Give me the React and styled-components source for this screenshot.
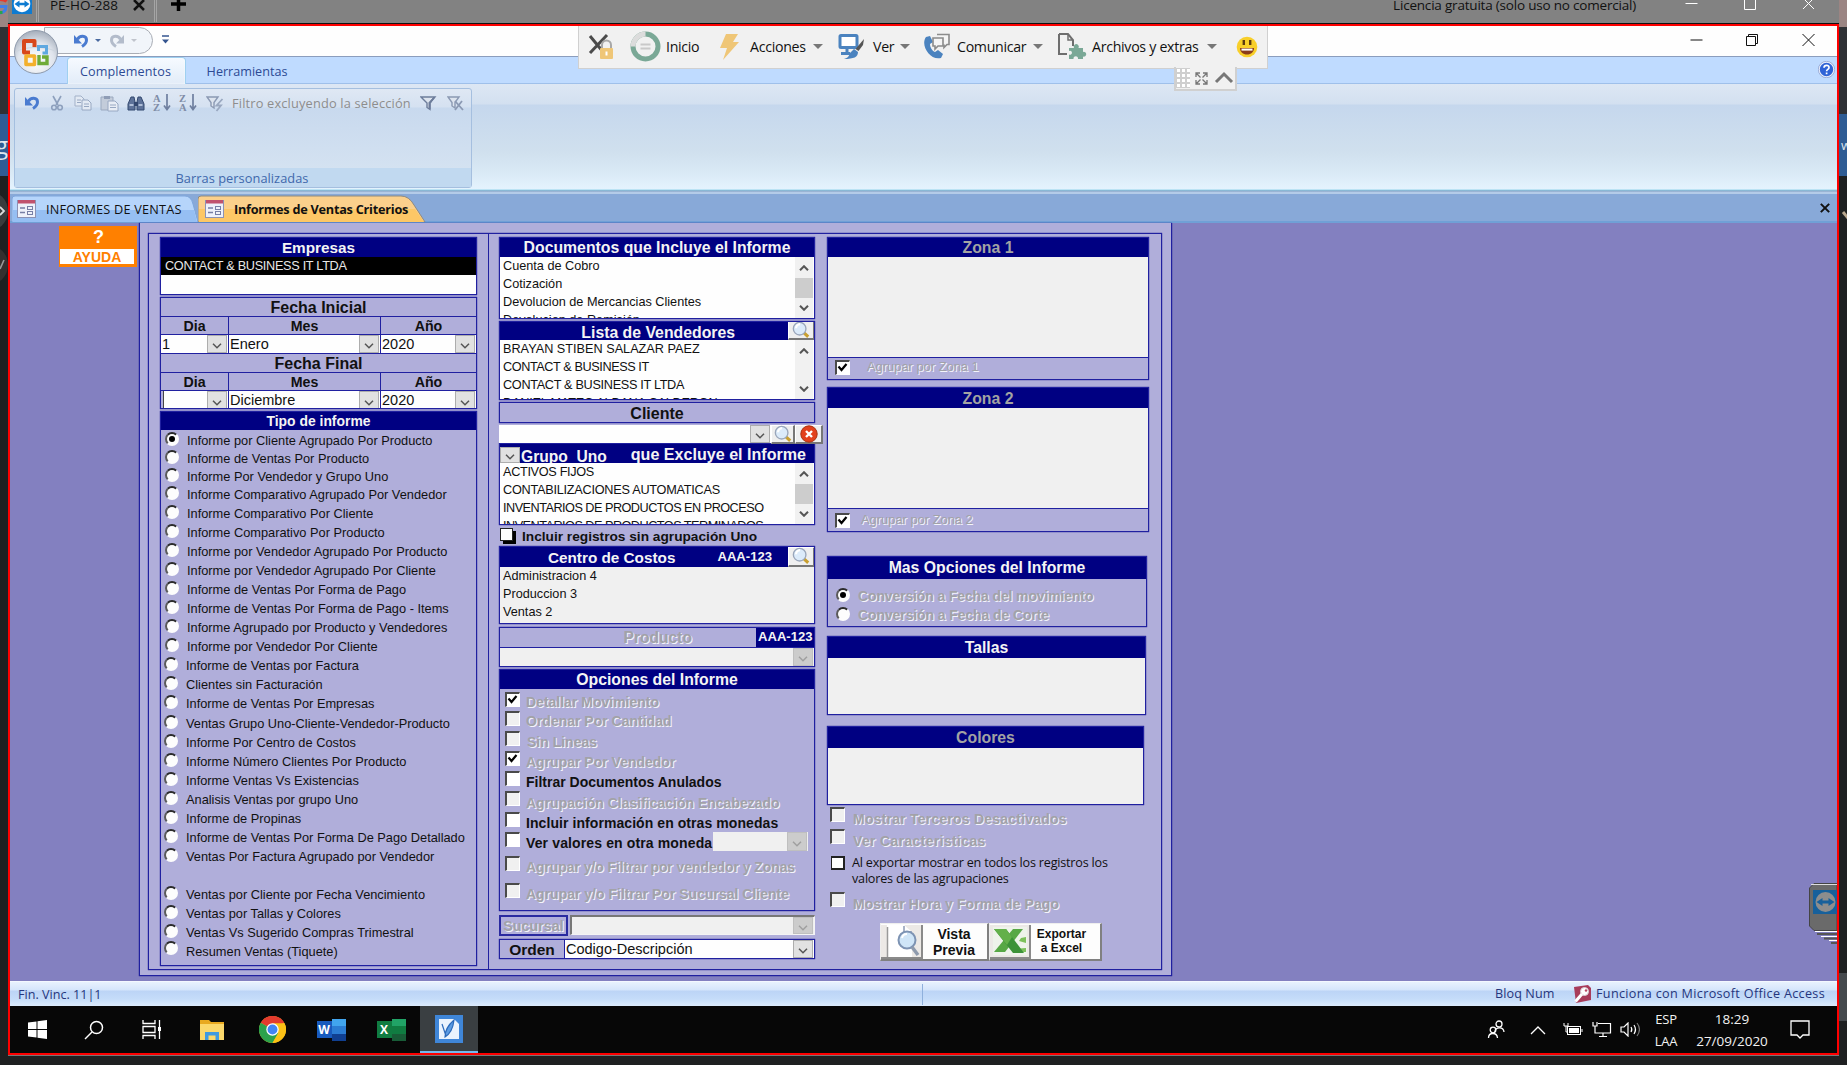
import React from "react";
import styled, { createGlobalStyle, css } from "styled-components";

const NAVY = "#000082";
const LINE = "#2020a0";
const LILAC = "#b0aeda";
const BACK = "#8380c0";
const ARIAL = `"Liberation Sans", Arial, sans-serif`;
const SEGOE = `"Open Sans", "Noto Sans", sans-serif`;

const Global = createGlobalStyle`
  *, *::before, *::after { box-sizing: border-box; }
  html, body { margin: 0; padding: 0; background: #fff; overflow: hidden; }
  body { font-family: ${ARIAL}; color: #111; }
  svg { display: block; flex: none; }
`;

/* ---------- outer desktop ---------- */
const Screen = styled.div`
  position: relative;
  width: 1847px;
  height: 1079px;
  overflow: hidden;
  background: #fff;
`;
const Desktop = styled.div`
  display: flex;
  height: 1065px;
  background: #1e2021;
`;
const EdgeStrip = styled.div`
  display: flex;
  flex-direction: column;
  flex: none;
  width: 8px;
  overflow: hidden;
`;
const EdgePart = styled.div`
  flex: none;
  display: flex;
  align-items: center;
  justify-content: ${(p) => p.$align || "flex-end"};
  height: ${(p) => p.$h}px;
  background: ${(p) => p.$bg};
  color: ${(p) => p.$c || "#dfe6ee"};
  font: ${(p) => p.$size || 22}px ${SEGOE};
  white-space: nowrap;
  overflow: hidden;
`;
const Center = styled.div`
  display: flex;
  flex-direction: column;
  width: 1831px;
  height: 1056px;
  border-bottom: 1px solid #777;
`;
const SessionBar = styled.div`
  display: flex;
  height: 24px;
  background: #828282;
  border-bottom: 1px solid #111;
  padding-left: 4px;
  overflow: hidden;
`;
const SessionText = styled.span`
  font: ${(p) => p.$size || 13}px/20px ${SEGOE};
  letter-spacing: ${(p) => p.$ls || 0}px;
  margin: -5px 0 0 ${(p) => p.$ml || 0}px;
  color: #111;
  white-space: nowrap;
`;
const SessionSep = styled.i`
  width: 3px;
  height: 22px;
  margin-left: ${(p) => p.$ml}px;
  border-left: 1px solid #a5a5a5;
  border-right: 1px solid #a5a5a5;
`;
const Slot = styled.span`
  display: flex;
  flex: none;
  margin: ${(p) => p.$m || 0};
`;
const Spacer = styled.div`
  flex: 1;
`;
const RemoteWindow = styled.div`
  position: relative;
  display: flex;
  flex-direction: column;
  height: 1031px;
  border: 2px solid #fe0000;
  overflow: hidden;
`;

/* ---------- Office chrome ---------- */
const TitleBar = styled.div`
  display: flex;
  height: 31px;
  background: #fefefe;
  border-bottom: 1px solid #8b9dbd;
`;
const QuickAccess = styled.div`
  display: flex;
  align-items: center;
  width: 109px;
  height: 27px;
  margin: 1px 0 0 34px;
  padding-left: 28px;
  border: 1px solid #a9adb5;
  border-radius: 0 14px 14px 0;
  background: #f1f5fa;
`;
const OfficeButton = styled.div`
  position: absolute;
  left: 4px;
  top: 3px;
`;
const TabStrip = styled.div`
  display: flex;
  height: 27px;
  padding-left: 57px;
  background: #bfdbff;
  border-bottom: 1px solid #9fc0ea;
`;
const RibbonTab = styled.div`
  width: ${(p) => p.$w}px;
  height: 27px;
  font: 12.6px/29px ${SEGOE};
  letter-spacing: ${(p) => p.$ls || 0}px;
  color: #2c4a94;
  text-align: center;
  white-space: nowrap;
  ${(p) =>
    p.$active &&
    css`
      background: linear-gradient(#f6faff, #e2ecf8);
      border: 1px solid #9fd0f0;
      border-bottom: 0;
      border-radius: 4px 4px 0 0;
      box-shadow: inset 0 0 2px #fff;
      line-height: 28px;
      padding-right: 2px;
    `}
`;
const Ribbon = styled.div`
  height: 110px;
  padding: 4px 4px 0;
  background: linear-gradient(#dde7f4 0, #d3e0f0 20px, #c5d7ed 21px, #d0e0ee 68px, #d9e9f5 88px, #e4f3fe 105px, #93d3ea 106px, #7f9cbf 107px, #b4cbe8 108px);
`;
const RibbonGroup = styled.div`
  display: flex;
  flex-direction: column;
  width: 458px;
  height: 100px;
  border: 1px solid #a5bfdf;
  border-radius: 3px;
  background: linear-gradient(#dfe8f4 0, #d5e1f1 18px, #c8d9ee 19px, #d4e2f1 80px);
`;
const RibbonRow = styled.div`
  display: flex;
  align-items: center;
  height: 28px;
  padding-left: 9px;
`;
const RibbonText = styled.span`
  width: 189px;
  padding-left: 8px;
  font: 12.8px/20px ${SEGOE};
  letter-spacing: 0.17px;
  color: #8d8d8d;
  white-space: nowrap;
`;
const RibbonLabel = styled.div`
  margin-top: auto;
  height: 19px;
  padding-right: 2px;
  background: #c1d9f0;
  color: #4068ac;
  text-align: center;
  font: 12.8px/20px ${SEGOE};
  letter-spacing: 0.05px;
`;
const DocTabs = styled.div`
  display: flex;
  align-items: flex-end;
  height: 29px;
  padding: 0 7px 0 2px;
  background: #88a9d8;
  border-bottom: 2px solid #70a0d6;
`;
const DocTab = styled.div`
  position: relative;
  display: flex;
  align-items: center;
  width: ${(p) => p.$w}px;
  height: 27px;
  margin-bottom: -1px;
`;
const DocShape = styled.span`
  position: absolute;
  inset: 0;
`;
const DocName = styled.span`
  position: relative;
  margin-left: 10px;
  font: ${(p) => (p.$bold ? 700 : 400)} 12.7px/20px ${SEGOE};
  letter-spacing: ${(p) => p.$ls || 0}px;
  color: #111;
  white-space: nowrap;
`;
const TabIcon = styled.span`
  position: relative;
  margin-left: ${(p) => p.$ml}px;
`;

/* ---------- floating remote toolbar ---------- */
const RemoteToolbar = styled.div`
  position: absolute;
  left: 568px;
  top: 0;
  display: flex;
  align-items: center;
  width: 690px;
  height: 43px;
  padding: 0 0 1px 9px;
  background: #f1f1f1;
  border: 1px solid #d0d0d0;
  border-top: 0;
`;
const RemoteItem = styled.div`
  display: flex;
  align-items: center;
  flex: none;
  width: ${(p) => p.$w}px;
  gap: ${(p) => p.$gap || 8}px;
`;
const RemoteText = styled.span`
  font: 14.2px/20px ${SEGOE};
  letter-spacing: -0.3px;
  color: #111;
  white-space: nowrap;
`;
const Caret = styled.i`
  border: ${(p) => p.$s || 5}px solid transparent;
  border-top-color: ${(p) => p.$c || "#777"};
  border-bottom: 0;
  margin-left: ${(p) => p.$ml || 0}px;
`;
const RemoteHandle = styled.div`
  position: absolute;
  left: 1164px;
  top: 41px;
  width: 63px;
  height: 24px;
  padding-top: 1px;
  background: #f1f1f1;
  border: 2px solid #d0d0d0;
  border-top: 0;
`;
const SideHandle = styled.div`
  position: absolute;
  left: 1799px;
  top: 857px;
`;

/* ---------- workspace / Access form ---------- */
const Workspace = styled.div`
  display: flex;
  height: 758px;
  background: ${BACK};
`;
const HelpPane = styled.div`
  width: 129px;
  padding: 3px 0 0 49px;
`;
const HelpButton = styled.div`
  width: 78px;
  height: 41px;
  padding: 0 3px 3px 1px;
  background: #ff8000;
  color: #fff;
  text-align: center;
  font: 700 18px/22px ${ARIAL};
`;
const HelpMark = styled.div`
  padding-left: 3px;
`;
const HelpCaption = styled.div`
  height: 15px;
  margin-top: 1px;
  background: #fff;
  color: #ff8000;
  font: 700 14px/16px ${ARIAL};
`;
const Form = styled.div`
  width: 1033px;
  height: 753px;
  padding: 10px 9px 6px 8px;
  background: ${LILAC};
  border: 1px solid ${LINE};
  border-top: 0;
  box-shadow: 0 0 1px ${NAVY};
`;
const FormFrame = styled.div`
  display: grid;
  grid-template-columns: 339px 339px 1fr;
  height: 737px;
  border: 1px solid ${LINE};
  box-shadow: 0 0 1px ${NAVY};
`;
const Column = styled.div`
  display: flex;
  flex-direction: column;
  padding: 3px 0 0 ${(p) => p.$pl}px;
  border-left: ${(p) => (p.$rule ? `1px solid ${LINE}` : "0")};
`;
const Box = styled.div`
  flex: none;
  display: flex;
  flex-direction: column;
  width: ${(p) => p.$w || 316}px;
  height: ${(p) => p.$h}px;
  margin-top: ${(p) => p.$mt || 0}px;
  border: 1px solid ${LINE};
  box-shadow: 0 0 1px ${NAVY};
  background: ${(p) => p.$bg || "transparent"};
  overflow: hidden;
`;
const Heading = styled.div`
  flex: none;
  display: flex;
  justify-content: ${(p) => p.$justify || "center"};
  align-items: center;
  height: ${(p) => p.$h || 20}px;
  margin: -1px -1px 0 -1px;
  padding: ${(p) => p.$pt ?? 2}px 0 0 ${(p) => p.$pl || 0}px;
  background: ${NAVY};
  color: ${(p) => (p.$dim ? "#a3a3a3" : "#f4f4f4")};
  font: 700 ${(p) => p.$size || 15.8}px/18px ${ARIAL};
  white-space: nowrap;
`;
const PlainHeading = styled.div`
  flex: none;
  height: 19px;
  text-align: center;
  font: 700 16px/${(p) => p.$lh || 20}px ${ARIAL};
  border-bottom: ${(p) => (p.$last ? 0 : `1px solid ${LINE}`)};
`;
const ListArea = styled.div`
  display: flex;
  flex: 1;
  min-height: 0;
  background: ${(p) => (p.$dim ? "#f0f0f0" : "#fefefe")};
`;
const Items = styled.div`
  flex: 1;
  min-width: 0;
  overflow: hidden;
  padding-left: 3px;
`;
const Item = styled.div`
  height: 18px;
  font: 12.7px/18px ${ARIAL};
  letter-spacing: ${(p) => p.$ls || 0}px;
  white-space: nowrap;
`;
const SelectedItem = styled(Item)`
  padding-left: 4px;
  background: #000;
  color: #e8e8e8;
`;
const ScrollTrack = styled.div`
  display: flex;
  flex-direction: column;
  justify-content: space-between;
  align-items: center;
  width: 18px;
  margin-right: 1px;
  padding: 8px 0 7px;
  background: #f1f1f1;
`;
const ScrollThumb = styled.div`
  width: 18px;
  height: 20px;
  background: #cdcdcd;
`;
const DateHeads = styled.div`
  display: grid;
  grid-template-columns: 67px 152px 1fr;
  flex: none;
  height: 18px;
  border-bottom: 1px solid ${LINE};
`;
const DateHead = styled.div`
  text-align: center;
  font: 700 14.2px/19px ${ARIAL};
  & + & {
    border-left: 1px solid ${LINE};
  }
`;
const DateFields = styled(DateHeads)`
  height: 19px;
  background: #fefefe;
  border-bottom: ${(p) => (p.$last ? 0 : `1px solid ${LINE}`)};
`;
const Combo = styled.div`
  display: flex;
  align-items: stretch;
  flex: ${(p) => (p.$w ? "none" : 1)};
  width: ${(p) => (p.$w ? `${p.$w}px` : "auto")};
  height: ${(p) => (p.$h ? `${p.$h}px` : "auto")};
  background: ${(p) => (p.$dim ? "#f0f0f0" : "#fefefe")};
  padding: 0 1px;
  font: 14.5px/18px ${ARIAL};
  white-space: nowrap;
  ${(p) => p.$ruled && `border-left: 1px solid ${LINE};`}
  ${(p) => p.$sunken && "border: 1px solid #f4f4f4; border-top: 2px solid #777; border-left: 2px solid #777;"}
  ${(p) => p.$caret && "box-shadow: inset 2px 0 0 #b0aeda, inset 3px 0 0 #444;"}
`;
const ComboValue = styled.span`
  flex: 1;
`;
const ComboButton = styled.span`
  display: flex;
  flex: none;
  align-items: center;
  justify-content: center;
  width: 20px;
  padding-top: 4px;
  background: ${(p) => (p.$dim ? "#cccccc" : "#e1e1e1")};
  border: 1px solid ${(p) => (p.$dim ? "#bfbfbf" : "#adadad")};
`;
const RadioList = styled.div`
  padding-top: 1px;
`;
const RadioRow = styled.div`
  display: flex;
  height: ${(p) => p.$h || 19}px;
  margin-top: ${(p) => p.$mt || 0}px;
  padding-left: ${(p) => p.$pl || 5}px;
`;
const RadioDot = styled.i`
  flex: none;
  display: flex;
  align-items: center;
  justify-content: center;
  width: 14px;
  height: 14px;
  margin: ${(p) => p.$mt || 1}px 8px 0 0;
  border-radius: 50%;
  background: #fdfdfd;
  border: 2px solid;
  border-color: #2b2b2b #fdfdfd #fdfdfd #5a5a5a;
  &::after {
    content: "";
    width: 6px;
    height: 6px;
    border-radius: 50%;
    background: ${(p) => (p.$on ? "#000" : "transparent")};
  }
`;
const RadioText = styled.span`
  font: 12.8px/19px ${ARIAL};
  white-space: nowrap;
`;
const OptionRow = styled.div`
  display: flex;
  flex: none;
  height: ${(p) => p.$h || 20}px;
  margin-top: ${(p) => p.$mt || 0}px;
  padding-left: ${(p) => p.$pl || 0}px;
`;
const CheckBox = styled.i`
  flex: none;
  width: 15px;
  height: 15px;
  margin-right: ${(p) => p.$mr || 6}px;
  background: ${(p) => (p.$dim ? "#f0f0f0" : "#fff")};
  border: 1px solid #fff;
  border-top: 2px solid #4a4a4a;
  border-left: 2px solid #4a4a4a;
`;
const FlatBox = styled.i`
  flex: none;
  width: 14px;
  height: 14px;
  margin: 0 7px 0 1px;
  background: #fff;
  border: 2px solid #222;
  border-left-width: 1px;
`;
const ShadowBox = styled.i`
  flex: none;
  width: 13px;
  height: 13px;
  margin: 0 9px 0 1px;
  background: #fdfdfd;
  border: 1px solid #222;
  box-shadow: 3px 3px 0 #000;
`;
const OptionText = styled.span`
  display: block;
  margin-top: ${(p) => p.$mt ?? 1}px;
  font: ${(p) => (p.$regular ? 400 : 700)} ${(p) => p.$size || 14}px/16px ${ARIAL};
  letter-spacing: ${(p) => p.$ls || 0}px;
  white-space: nowrap;
  ${(p) => p.$off && "color: #a2a2a8; text-shadow: 1px 1px 0 #f4f4fb;"}
`;
const SmallNote = styled.p`
  margin: -1px 0 0;
  font: 12.6px/15.5px ${SEGOE};
  letter-spacing: -0.2px;
  white-space: nowrap;
`;
const Code = styled.span`
  font: 700 13.1px/16px ${ARIAL};
`;
const Row = styled.div`
  display: flex;
  flex: none;
  height: ${(p) => p.$h}px;
  margin-top: ${(p) => p.$mt || 0}px;
`;
const ToolButton = styled.span`
  display: flex;
  flex: none;
  align-items: center;
  justify-content: center;
  width: ${(p) => p.$w || 27}px;
  height: ${(p) => p.$h || 19}px;
  background: #efefef;
  border: 1px solid #fff;
  border-right: 2px solid #777;
  border-bottom: 2px solid #777;
`;
const Strip = styled.div`
  position: relative;
  z-index: 1;
  display: flex;
  flex: none;
  width: 325px;
  height: 18px;
  margin-top: 2px;
`;
const GroupName = styled.span`
  align-self: flex-end;
  height: 14px;
  margin: 0 24px 0 1px;
  overflow: hidden;
  font: 700 15.6px/16px ${ARIAL};
`;
const SideLabel = styled.div`
  flex: none;
  width: ${(p) => p.$w}px;
  text-align: center;
  font: 700 15.5px/20px ${ARIAL};
  ${(p) => p.$boxed && `border: 2px solid #2a2aa0; line-height: 18px;`}
  ${(p) => p.$off && "color: #a2a2a8; text-shadow: 1px 1px 0 #f4f4fb; font-size: 14.3px;"}
`;
const ProductHead = styled.div`
  display: flex;
  justify-content: flex-end;
  flex: none;
  height: 20px;
  border-bottom: 1px solid ${LINE};
`;
const ProductCode = styled(Code)`
  width: 59px;
  margin: -1px -1px 0 64px;
  padding-left: 2px;
  background: ${NAVY};
  color: #f4f4f4;
  line-height: 20px;
  white-space: nowrap;
`;
const ZoneFoot = styled.div`
  display: flex;
  flex: none;
  height: ${(p) => p.$h}px;
  padding: ${(p) => p.$pt}px 0 0 7px;
  border-top: 1px solid ${LINE};
`;
const Actions = styled.div`
  display: flex;
  margin: 14px 0 0 53px;
`;
const BigButton = styled.div`
  display: flex;
  align-items: center;
  width: ${(p) => p.$w}px;
  height: 38px;
  background: #fdfdfd;
  border: 1px solid #eee;
  border-right: 2px solid #808080;
  border-bottom: 2px solid #808080;
`;
const BigIcon = styled.span`
  display: flex;
  align-items: center;
  justify-content: center;
  width: ${(p) => p.$w || 41}px;
  height: 34px;
  background: #ece9e6;
  border-right: 2px solid #8a8a8a;
  border-bottom: 2px solid #8a8a8a;
`;
const BigText = styled.span`
  flex: 1;
  text-align: center;
  padding: ${(p) => p.$pt || 0}px ${(p) => p.$pr || 0}px 0 0;
  font: 700 ${(p) => p.$size}px/${(p) => p.$lh}px ${ARIAL};
`;

/* ---------- bottom bars ---------- */
const StatusBar = styled.div`
  display: flex;
  align-items: center;
  height: 25px;
  background: linear-gradient(#e8f2fe 0, #d5e5fb 8px, #bcd4f6 9px, #c5dcf9 17px, #dcebfd 24px);
  border-top: 1px solid #f4f8ff;
  color: #25357c;
  font: 12.6px/22px ${SEGOE};
`;
const StatusCell = styled.span`
  width: ${(p) => p.$w}px;
  padding-left: ${(p) => p.$pl || 0}px;
  letter-spacing: ${(p) => p.$ls || 0}px;
  white-space: nowrap;
  ${(p) => p.$rule && "border-right: 1px solid #8fb0dc; height: 21px;"}
`;
const Taskbar = styled.div`
  display: flex;
  height: 47px;
  background: #070707;
`;
const TaskCell = styled.div`
  display: flex;
  flex: none;
  align-items: center;
  justify-content: center;
  width: ${(p) => p.$w || 59}px;
  background: ${(p) => (p.$active ? "#3a3f42" : "transparent")};
  border-bottom: ${(p) => (p.$active ? "2px solid #76b9ed" : "0")};
`;
const TrayText = styled.div`
  width: ${(p) => p.$w}px;
  color: #f2f2f2;
  text-align: center;
  font: ${(p) => p.$size || 13}px/22px ${SEGOE};
  letter-spacing: ${(p) => p.$ls || 0}px;
  padding-top: 2px;
  white-space: nowrap;
`;

/* ---------- drawings ---------- */
const Svg = ({ w, h = w, vb, children }) => (
  <svg width={w} height={h} viewBox={vb || `0 0 ${w} ${h}`} fill="none">
    {children}
  </svg>
);
const Chevron = ({ up, color = "#555", w = 10, sw = 2 }) => (
  <Svg w={w} h={6} vb="0 0 10 6">
    <path d={up ? "M1 5.2L5 1.2L9 5.2" : "M1 .8L5 4.8L9 .8"} stroke={color} strokeWidth={sw} />
  </Svg>
);
const Tick = () => (
  <Svg w={11} h={11}>
    <path d="M1.5 4.5L4.5 8L9.5 2" stroke="#000" strokeWidth="2.2" />
  </Svg>
);
const Lens = ({ s = 20 }) => (
  <Svg w={s} vb="0 0 20 20">
    <path d="M13 13l5 4.5" stroke="#c9a030" strokeWidth="3.4" />
    <circle cx="8.5" cy="8.5" r="7" fill="#dcebfa" stroke="#9aa6ba" strokeWidth="1.500" />
    <path d="M4.500 8a4.500 4.500 0 0 1 4.500-4.500" stroke="#fff" strokeWidth="2.400" />
  </Svg>
);
const RedX = () => (
  <Svg w={18}>
    <circle cx="9" cy="9" r="8.2" fill="#e2401c" stroke="#a8300f" />
    <path d="M6 6l6 6M12 6l-6 6" stroke="#fff" strokeWidth="2.4" />
  </Svg>
);
const TeamViewer = ({ s = 20, bg = "#0e7bd1", fg = "#fff" }) => (
  <Svg w={s} vb="0 0 20 20">
    <rect width="20" height="20" fill={bg} />
    <circle cx="10" cy="10" r="8.3" fill={fg} />
    <path d="M2.5 10l5-3.6v2.4h5V6.4l5 3.6-5 3.6v-2.4h-5v2.4z" fill={bg} />
  </Svg>
);
const GoogleEdge = () => (
  <Svg w={8} h={27}>
    <path d="M0-.5C3-.5 5 0 6.500 1.500" stroke="#e33b2e" strokeWidth="3" />
    <path d="M0 6.500h6c0 4-2.500 6-6 6.500" stroke="#3f7fe8" strokeWidth="3" />
    <path d="M0 12.500h2.500" stroke="#2ba24c" strokeWidth="3" />
  </Svg>
);
const EdgeArrow = () => (
  <Svg w={8} h={42}>
    <circle cx="-12" cy="21" r="20" fill="#3a3c3d" />
    <path d="M0 17l4 4-4 4" stroke="#ddd" strokeWidth="1.800" />
  </Svg>
);
const EdgeMark = () => (
  <Svg w={8} h={42}>
    <circle cx="-12" cy="21" r="20" fill="#34302f" />
    <path d="M0 25l4-9" stroke="#999" strokeWidth="1.600" />
  </Svg>
);
const EdgeCheck = () => (
  <Svg w={8} h={20}>
    <path d="M4 8l5 6" stroke="#b9a78f" strokeWidth="3" />
  </Svg>
);
const Cross = ({ s = 12, c = "#111", sw = 1.2 }) => (
  <Svg w={s} vb="0 0 12 12">
    <path d="M1 1l10 10M11 1L1 11" stroke={c} strokeWidth={sw} />
  </Svg>
);
const Undo = ({ c = "#4a7bd0", flip }) => (
  <Svg w={16} h={16}>
    <g transform={flip ? "translate(16 0) scale(-1 1)" : undefined}>
      <path d="M4.500 6.500c2-4.500 9-4.500 9 .5 0 3-2 5-4.500 6.500" stroke={c} strokeWidth="3" />
      <path d="M1 2v8.500h8z" fill={c} />
    </g>
  </Svg>
);
const OfficeOrb = () => (
  <Svg w={46} h={46}>
    <defs>
      <radialGradient id="orb" cx=".5" cy=".7" r=".7">
        <stop offset="0" stopColor="#fff" />
        <stop offset=".6" stopColor="#dfe4ec" />
        <stop offset="1" stopColor="#a4adba" />
      </radialGradient>
    </defs>
    <circle cx="22" cy="23" r="21.5" fill="url(#orb)" stroke="#8d99ab" />
    <path d="M2 23c6-6 34-6 40 0" stroke="#cdd5df" strokeWidth="1" />
    <path d="M20.500 18v-6H10v11.500h6" stroke="#d8481b" strokeWidth="4" strokeLinejoin="round" />
    <path d="M24.500 22v-4.500h8v6.500h-4" stroke="#5fa8e0" strokeWidth="3" />
    <path d="M20.500 30v5.500H12V27h8.500v3" stroke="#f3b02c" strokeWidth="3.600" strokeLinejoin="round" />
    <path d="M25 26v8.500h8V28h-5" stroke="#6fab38" strokeWidth="3.400" />
  </Svg>
);
const FormIcon = () => (
  <Svg w={19} h={19}>
    <rect x=".5" y="1.500" width="18" height="17" fill="#eef1fa" stroke="#8b92b5" />
    <rect x="1" y="1" width="17" height="3.500" fill="#c0526e" />
    <path d="M3 9h5M3 13.500h5" stroke="#777fa6" strokeWidth="1.500" />
    <rect x="10.500" y="7.500" width="5" height="3" stroke="#777fa6" />
    <rect x="10.500" y="12.500" width="5" height="3" stroke="#777fa6" />
  </Svg>
);
const Scissors = () => (
  <Svg w={14} h={16}>
    <path d="M3 1l5 9M11 1L6 10" stroke="#8ea0bd" strokeWidth="1.600" />
    <circle cx="4" cy="12.500" r="2.300" stroke="#8ea0bd" strokeWidth="1.600" />
    <circle cx="10" cy="12.500" r="2.300" stroke="#8ea0bd" strokeWidth="1.600" />
  </Svg>
);
const Copy = () => (
  <Svg w={18} h={16}>
    <path d="M1 1h6l3 3v7H1z" fill="#e3eaf4" stroke="#a3b1c8" />
    <path d="M8 5h6l3 3v7H8z" fill="#e3eaf4" stroke="#98a8c2" />
    <path d="M10 9h5M10 11.500h5M3 5h4M3 7.500h4" stroke="#98a8c2" />
  </Svg>
);
const Paste = () => (
  <Svg w={19} h={17}>
    <path d="M1 2h12v13H1z" fill="#c3ccda" stroke="#9ba9bf" />
    <path d="M4 1h6v3H4z" fill="#8f9db6" />
    <path d="M8 6h7l3 3v7H8z" fill="#e8edf5" stroke="#98a8c2" />
    <path d="M10 10h6M10 12.500h6" stroke="#98a8c2" />
  </Svg>
);
const Binoculars = () => (
  <Svg w={18} h={17}>
    <path d="M4 2h3l1 5v8H1V9zM11 2h3l3 7v6h-7V7z" fill="#5d7299" stroke="#33486f" />
    <path d="M7 7h4v4H7z" fill="#33486f" />
    <path d="M2.500 10h4M11.500 10h4" stroke="#cad7ec" strokeWidth="1.500" />
  </Svg>
);
const SortText = styled.span`
  width: 9px;
  color: #7f8ca6;
  font: 700 10.5px/9px "Liberation Serif", serif;
`;
const Sort = ({ a, b }) => (
  <>
    <SortText>
      {a}
      <br />
      {b}
    </SortText>
    <Svg w={9} h={17}>
      <path d="M5 0v15M2 11.500l3 4 3-4" stroke="#6f7f9f" strokeWidth="1.700" />
    </Svg>
  </>
);
const Funnel = ({ extra, c = "#8b99b3" }) => (
  <Svg w={18} h={17}>
    <path d={extra ? "M1 2h11L8 7.500V13l-3-2V7.500z" : "M1 2h14l-5 6v6.500l-3-2V8z"} fill="#dde4ee" stroke={c} strokeWidth="1.400" />
    {!extra && <path d="M9 7.500L14 2v1l-4 5.500V14l-1-1z" fill={c} stroke={c} />}
    {extra === "bolt" && <path d="M16.500 4l-6 6.500h4.500L10.500 16" stroke="#9aa8c0" strokeWidth="1.800" />}
    {extra === "x" && <path d="M8 6l8 9M15 6l-7 9" stroke="#8b99b3" strokeWidth="1.800" />}
  </Svg>
);
const XLock = () => (
  <Svg w={26} h={27}>
    <path d="M2 3l14 17M19 2L2 20" stroke="#4b4b4b" strokeWidth="3" />
    <path d="M14 15v-3a4.500 4.500 0 0 1 9 0v3" stroke="#a8a8a8" strokeWidth="2" />
    <rect x="12" y="15" width="13" height="11" rx="1" fill="#efc677" />
    <path d="M18.500 18.500v4" stroke="#fff" strokeWidth="2" />
  </Svg>
);
const Ring = () => (
  <Svg w={31}>
    <circle cx="15.500" cy="15.500" r="12.500" stroke="#7aa896" strokeWidth="5" />
    <path d="M3 15.500A12.500 12.500 0 0 1 15.500 3" stroke="#dcdcdc" strokeWidth="5" />
    <path d="M10.500 13.500h10M10.500 17.500h10" stroke="#c9c9c9" strokeWidth="2" />
  </Svg>
);
const Bolt = () => (
  <Svg w={21} h={26}>
    <path d="M7 0h12l-5 8h6L4 26l4-12H1z" fill="#efc677" />
  </Svg>
);
const Monitor = () => (
  <Svg w={27} h={27}>
    <rect x="2" y="2.500" width="17" height="12" rx="1" fill="#fff" stroke="#4b83bf" strokeWidth="3" />
    <path d="M9 15v4M3 20.500h9" stroke="#4b83bf" strokeWidth="3" />
    <path d="M26 6l-1 6-4.500 6-3-2z" fill="#555" />
    <path d="M16 16l4 3c0 5-4 7-14 7 4-1 5-3 6-6z" fill="#4b83bf" />
  </Svg>
);
const PhoneTalk = () => (
  <Svg w={28} h={27}>
    <path d="M4 4c-6 8 4 24 15 21l2-4-5-4-3 2c-3-1-5-5-5-8l3-2-3-6z" fill="#4b83bf" />
    <path d="M15 1.500h12v10h-2l-3 3v-3" fill="#f5f5f5" stroke="#8b8b8b" strokeWidth="1.600" />
    <path d="M11 5h10v8h-5l-3 3v-3h-2z" fill="#f5f5f5" stroke="#8b8b8b" strokeWidth="1.600" />
  </Svg>
);
const FileExtra = () => (
  <Svg w={30} h={27}>
    <path d="M2 1h9l5 6v6M2 1v20h8" stroke="#6e6e6e" strokeWidth="2" />
    <path d="M11 1v6h5" stroke="#6e6e6e" strokeWidth="1.500" />
    <path d="M12 15h5a2.600 2.600 0 1 1 4.500 0H26v4a2.400 2.400 0 1 1 0 4.500V26h-5a2.300 2.300 0 1 0-4.500 0H12v-4.500a2 2 0 1 0 0-3.500z" fill="#7aa896" />
  </Svg>
);
const Smile = () => (
  <Svg w={22}>
    <circle cx="11" cy="11" r="10.300" fill="#f8cf2a" />
    <path d="M7.800 4v5M14.200 4v5" stroke="#5b3a10" strokeWidth="2.400" />
    <path d="M4 12h14c0 4-3 6.500-7 6.500S4 16 4 12z" fill="#8a3c1a" />
    <path d="M5.500 12.600h11v2h-11z" fill="#fff" />
  </Svg>
);
const HandleArt = () => (
  <Svg w={60} h={20}>
    <rect width="14" height="20" fill="#cfcfcf" />
    {[1, 6, 11].map((x) => [1, 6, 11, 16].map((y) => <rect key={`${x}-${y}`} x={x} y={y} width="3" height="3" fill="#fff" />))}
    <path d="M20 9V5h4M27 5h4v4M31 12v4h-4M24 16h-4v-4M20.500 5.500l4 4M30.500 5.500l-4 4M30.500 15.500l-4-4M20.500 15.500l4-4" stroke="#777" strokeWidth="1.300" />
    <path d="M40 14l8-8 8 8" stroke="#777" strokeWidth="3" />
  </Svg>
);
const SideArt = () => (
  <Svg w={28} h={62}>
    <path d="M5 .5h23v47H5L.5 43V5z" fill="#6a6a6a" stroke="#444" />
    <path d="M2 1.500h26" stroke="#ddd" />
    <g transform="translate(4 7)">
      <rect width="24" height="24" fill="#17609b" />
      <circle cx="12.500" cy="12" r="10" fill="#8d8d8d" />
      <path d="M3.500 12l6-4v2.600h6V8l6 4-6 4v-2.600h-6V16z" fill="#17609b" />
    </g>
    <path d="M6 48.500h22M12 53.500h16M20 57.500h8" stroke="#fff" />
    <path d="M8 51h20M15 55.500h13M22 60h6" stroke="#555" strokeWidth="2" />
  </Svg>
);
const HelpOrb = () => (
  <Svg w={17} h={17}>
    <circle cx="8.500" cy="8.500" r="7.500" fill="#2f63d6" stroke="#e8eefc" strokeWidth="1.600" />
    <circle cx="8.500" cy="8.500" r="8.200" stroke="#7b8cc0" strokeWidth=".6" />
    <path d="M6 6.700c.2-3.200 5.200-3 5 0-.1 1.700-2.400 1.700-2.400 3.500M8.600 11.500v1.700" stroke="#fff" strokeWidth="1.700" />
  </Svg>
);
const Preview = () => (
  <Svg w={38} h={32}>
    <path d="M5 0h17l8 7v25H5z" fill="#fff" />
    <path d="M5.500 2v30" stroke="#999" strokeWidth="1.500" />
    <path d="M22 1v6h8" stroke="#8d9bb5" strokeWidth="1.500" />
    <circle cx="25" cy="15" r="8.500" fill="#cfe5f7" stroke="#7d93b3" strokeWidth="2" />
    <path d="M20 13a5 5 0 0 1 5-4" stroke="#fff" strokeWidth="2" />
    <path d="M30 22l6 8" stroke="#8f9bad" strokeWidth="3.500" />
  </Svg>
);
const ExcelX = () => (
  <Svg w={36} h={30}>
    <rect x="1" y="1" width="34" height="28" fill="#eef3ea" />
    <path d="M31 3H21L2 26h11z" fill="#57a845" />
    <path d="M34 22l-12 1 5 3h7zM29 12l5-1v6l-7-2z" fill="#7cc05a" />
    <path d="M2 3h12l18 24H21z" fill="#3c9238" />
    <path d="M2 3h12l6 8-5 8z" fill="#63b04a" />
  </Svg>
);
const AccessKey = () => (
  <Svg w={19} h={19}>
    <path d="M1 2l14-2 3 3v12L3 18z" fill="#a83c5a" />
    <circle cx="11.500" cy="6.500" r="4" fill="#fff" stroke="#d8cdd2" />
    <path d="M9 9L2.500 16.500" stroke="#fff" strokeWidth="3" />
    <circle cx="13" cy="5.500" r="1.200" fill="#b94a63" />
  </Svg>
);
const WindowsLogo = () => (
  <Svg w={19} h={19}>
    <path d="M0 2.600L8.500 1.500V9H0zM9.500 1.300L19 0v9H9.500zM0 10h8.500v7.500L0 16.400zM9.500 10H19v9l-9.500-1.300z" fill="#fff" />
  </Svg>
);
const SearchGlyph = () => (
  <Svg w={20}>
    <circle cx="12.500" cy="7.500" r="6" stroke="#fff" strokeWidth="1.500" />
    <path d="M8 12l-7 7" stroke="#fff" strokeWidth="1.500" />
  </Svg>
);
const TaskView = () => (
  <Svg w={20} h={19}>
    <path d="M1 0v3.500h12V0M1 19v-3.500h12V19M1 6.500h12v6H1zM17.500 0v19" stroke="#fff" strokeWidth="1.300" />
    <rect x="16" y="7" width="3" height="4" fill="#fff" />
  </Svg>
);
const Explorer = () => (
  <Svg w={26} h={23}>
    <path d="M1 2h9l2 2h13v6H1z" fill="#e8a920" />
    <path d="M1 6h24v16H1z" fill="#fbd86b" />
    <path d="M6 22v-8h14v8h-3.500v-4.500h-7V22z" fill="#3f9ae0" />
  </Svg>
);
const Chrome = () => (
  <Svg w={27} vb="0 0 26 26">
    <circle cx="13" cy="13" r="13" fill="#fbc116" />
    <path d="M13 13L1.700 6.500A13 13 0 0 1 24.300 6.500z" fill="#e33b2e" />
    <path d="M13 13L1.700 6.500A13 13 0 0 0 13 26l5.500-9.500z" fill="#2ba24c" />
    <path d="M13 7h11.600A13 13 0 0 1 13 26l5.500-9.500z" fill="#fbc116" />
    <circle cx="13" cy="13" r="6" fill="#fff" />
    <circle cx="13" cy="13" r="4.800" fill="#4285f4" />
  </Svg>
);
const AppLetter = styled.span`
  width: 15px;
  height: 17px;
  background: ${(p) => p.$bg};
  color: #fff;
  text-align: center;
  font: 700 12px/17px ${SEGOE};
`;
const AppSheet = styled.span`
  width: 14px;
  height: 22px;
  background: linear-gradient(${(p) => p.$a} 33%, ${(p) => p.$b} 33% 66%, ${(p) => p.$c} 66%);
`;
const Helisa = () => (
  <Svg w={28} h={28}>
    <rect width="28" height="28" fill="#3f86d8" />
    <path d="M4 4h15l5 5v15H4z" fill="#eaf3fd" />
    <path d="M10 22c0-6 2-11 9-17-1 9-4 14-9 17zM7 9l4 12" fill="#5b9be2" stroke="#2c6bbb" strokeWidth="1.200" />
  </Svg>
);
const People = () => (
  <Svg w={18} h={19}>
    <circle cx="12" cy="4" r="3" stroke="#fff" strokeWidth="1.300" />
    <path d="M8 12c0-5 8.500-6 9 0" stroke="#fff" strokeWidth="1.300" />
    <circle cx="6" cy="10" r="2.800" stroke="#fff" strokeWidth="1.300" />
    <path d="M1.500 18c0-6 8.500-6 9 0" stroke="#fff" strokeWidth="1.300" />
  </Svg>
);
const Battery = () => (
  <Svg w={20} h={14}>
    <rect x="4.500" y="3.500" width="13" height="8" stroke="#fff" />
    <rect x="6" y="5" width="10" height="5" fill="#fff" />
    <path d="M19 6v3M1 0v3h4V0M3 3v6h2" stroke="#fff" />
  </Svg>
);
const NetIcon = () => (
  <Svg w={20} h={17}>
    <path d="M6 2.500h12.500v9.500H3V8M11 12v3.500M7 15.500h8M1 1v4h4V1M3 5v5" stroke="#fff" strokeWidth="1.200" />
  </Svg>
);
const Volume = () => (
  <Svg w={20} h={15}>
    <path d="M1 5h3l4-4v13l-4-4H1z" stroke="#fff" strokeWidth="1.200" />
    <path d="M11 5c1 1.500 1 3.500 0 5M14 3c2 3 2 6 0 9" stroke="#fff" strokeWidth="1.200" />
    <path d="M17 1c3 4 3 9 0 13" stroke="#777" strokeWidth="1.200" />
  </Svg>
);
const Notice = () => (
  <Svg w={20} h={20}>
    <path d="M1 1h18v14h-6l-3 3-3-3H1z" stroke="#fff" strokeWidth="1.300" />
  </Svg>
);

/* ---------- composed controls ---------- */
const Drop = ({ dim, children, ...rest }) => (
  <Combo $dim={dim} {...rest}>
    <ComboValue>{children}</ComboValue>
    <ComboButton $dim={dim}>
      <Chevron color={dim ? "#a0a0a0" : "#555"} sw={1.5} />
    </ComboButton>
  </Combo>
);
const Scroller = ({ thumb }) => (
  <ScrollTrack>
    <Chevron up />
    {thumb && <ScrollThumb />}
    <Chevron />
  </ScrollTrack>
);
const List = ({ items, dim, scroll, thumb }) => (
  <ListArea $dim={dim}>
    <Items>
      {items.map(([text, spacing]) => (
        <Item key={text} $ls={spacing}>
          {text}
        </Item>
      ))}
    </Items>
    {scroll && <Scroller thumb={thumb} />}
  </ListArea>
);
const Option = ({ label, checked, off, h, drop = 2, mt, pl, regular, size, mr, ls, children }) => (
  <OptionRow $h={h} $mt={mt} $pl={pl}>
    <CheckBox $dim={off && !checked} $mr={mr}>
      {checked && <Tick />}
    </CheckBox>
    <OptionText $mt={drop} $off={off} $regular={regular} $size={size} $ls={ls}>
      {label}
    </OptionText>
    {children}
  </OptionRow>
);
const DateBlock = ({ title, day, month, year, last, caret }) => (
  <>
    <PlainHeading>{title}</PlainHeading>
    <DateHeads>
      <DateHead>Dia</DateHead>
      <DateHead>Mes</DateHead>
      <DateHead>Año</DateHead>
    </DateHeads>
    <DateFields $last={last}>
      <Drop $caret={caret}>{day}</Drop>
      <Drop $ruled>{month}</Drop>
      <Drop $ruled>{year}</Drop>
    </DateFields>
  </>
);

const REPORTS = [
  "Informe por Cliente Agrupado Por Producto",
  "Informe de Ventas Por Producto",
  "Informe Por Vendedor y Grupo Uno",
  "Informe Comparativo Agrupado Por Vendedor",
  "Informe Comparativo Por Cliente",
  "Informe Comparativo Por Producto",
  "Informe por Vendedor Agrupado Por Producto",
  "Informe por Vendedor Agrupado Por Cliente",
  "Informe de Ventas Por Forma de Pago",
  "Informe de Ventas Por Forma de Pago - Items",
  "Informe Agrupado por Producto y Vendedores",
  "Informe por Vendedor Por Cliente",
  "Informe de Ventas por Factura",
  "Clientes sin Facturación",
  "Informe de Ventas Por Empresas",
  "Ventas Grupo Uno-Cliente-Vendedor-Producto",
  "Informe Por Centro de Costos",
  "Informe Número Clientes Por Producto",
  "Informe Ventas Vs Existencias",
  "Analisis Ventas por grupo Uno",
  "Informe de Propinas",
  "Informe de Ventas Por Forma De Pago Detallado",
  "Ventas Por Factura Agrupado por Vendedor",
  "Ventas por Cliente por Fecha Vencimiento",
  "Ventas por Tallas y Colores",
  "Ventas Vs Sugerido Compras Trimestral",
  "Resumen Ventas (Tiquete)",
];
const DOCUMENTS = [["Cuenta de Cobro"], ["Cotización"], ["Devolucion de Mercancias Clientes"], ["Devolucion de Remisión"]];
const SELLERS = [
  ["BRAYAN STIBEN SALAZAR PAEZ", 0],
  ["CONTACT & BUSINESS IT", -0.42],
  ["CONTACT & BUSINESS IT LTDA", -0.32],
  ["DANIEL MATEO ALDANA CALDERON", -0.2],
];
const GROUPS = [
  ["ACTIVOS FIJOS", -0.32],
  ["CONTABILIZACIONES AUTOMATICAS", -0.25],
  ["INVENTARIOS DE PRODUCTOS EN PROCESO", -0.52],
  ["INVENTARIOS DE PRODUCTOS TERMINADOS", -0.52],
];
const COST_CENTERS = [["Administracion 4"], ["Produccion 3"], ["Ventas 2"]];

const LeftColumn = () => (
  <Column $pl={11}>
    <Box $w={317} $h={58} $bg="#fefefe">
      <Heading $size={15.3}>Empresas</Heading>
      <SelectedItem $ls={-0.3}>CONTACT &amp; BUSINESS IT LTDA</SelectedItem>
    </Box>
    <Box $w={317} $h={112} $mt={2}>
      <DateBlock title="Fecha Inicial" day="1" month="Enero" year="2020" />
      <DateBlock title="Fecha Final" day="" month="Diciembre" year="2020" last caret />
    </Box>
    <Box $w={317} $h={555} $mt={2}>
      <Heading $h={19} $size={13.9} $pt={1}>
        Tipo de informe
      </Heading>
      <RadioList>
        {REPORTS.map((name, i) => (
          <RadioRow key={name} $h={i < 3 ? 18 : i === 14 ? 20 : 19} $mt={i === 23 ? 19 : 0} $pl={i < 12 ? 4 : 3}>
            <RadioDot $on={i === 0} $mt={i === 26 ? -1 : 1} />
            <RadioText>{name}</RadioText>
          </RadioRow>
        ))}
      </RadioList>
    </Box>
  </Column>
);

const MiddleColumn = () => (
  <Column $pl={10} $rule>
    <Box $h={82}>
      <Heading>Documentos que Incluye el Informe</Heading>
      <List scroll thumb items={DOCUMENTS} />
    </Box>
    <Box $h={79} $mt={2}>
      <Heading $justify="flex-end" $h={19} $pt={0}>
        <Slot $m="4px 53px 0 0">Lista de Vendedores</Slot>
        <ToolButton $h={19}>
          <Lens s={18} />
        </ToolButton>
      </Heading>
      <List scroll items={SELLERS} />
    </Box>
    <Box $h={21} $mt={2}>
      <PlainHeading $last $lh={21}>
        Cliente
      </PlainHeading>
    </Box>
    <Strip>
      <Drop $w={272} />
      <ToolButton $w={24} $h={19}>
        <Lens s={18} />
      </ToolButton>
      <ToolButton $w={28} $h={19}>
        <RedX />
      </ToolButton>
    </Strip>
    <Box $h={82}>
      <Heading $justify="flex-start" $size={16.1}>
        <Slot $m="2px 0 0">
          <Combo $w={21} $h={16}>
            <ComboButton>
              <Chevron sw={1.5} />
            </ComboButton>
          </Combo>
        </Slot>
        <GroupName>Grupo_Uno</GroupName>
        que Excluye el Informe
      </Heading>
      <List scroll thumb items={GROUPS} />
    </Box>
    <OptionRow $h={18} $mt={3}>
      <ShadowBox />
      <OptionText $size={13.7} $mt={1}>
        Incluir registros sin agrupación Uno
      </OptionText>
    </OptionRow>
    <Box $h={78}>
      <Heading $justify="flex-end" $h={21} $size={15.3} $pt={0}>
        <Slot $m="3px 42px 0 0">Centro de Costos</Slot>
        <Slot $m="0 16px 0 0">
          <Code>AAA-123</Code>
        </Slot>
        <ToolButton $h={20}>
          <Lens s={18} />
        </ToolButton>
      </Heading>
      <List dim items={COST_CENTERS} />
    </Box>
    <Box $h={40} $mt={3}>
      <ProductHead>
        <OptionText $off $size={15.6} $mt={2}>
          Producto
        </OptionText>
        <ProductCode>AAA-123</ProductCode>
      </ProductHead>
      <Drop dim />
    </Box>
    <Box $h={242} $mt={2}>
      <Heading>Opciones del Informe</Heading>
      <Option pl={5} mt={3} h={19} label="Detallar Movimiento" checked off />
      <Option pl={5} label="Ordenar Por Cantidad" off drop={2} />
      <Option pl={5} label="Sin Lineas" off mr={7} drop={3} />
      <Option pl={5} label="Agrupar Por Vendedor" checked off drop={3} />
      <Option pl={5} label="Filtrar Documentos Anulados" drop={3} />
      <Option pl={5} h={21} label="Agrupación Clasificación Encabezado" off drop={4} />
      <Option pl={5} label="Incluir información en otras monedas" drop={3} ls={0.07} />
      <Option pl={5} h={24} label="Ver valores en otra moneda" drop={3} ls={0.13}>
        <Slot $m="0 0 0 1px">
          <Drop dim $w={95} $h={19} />
        </Slot>
      </Option>
      <Option pl={5} h={27} label="Agrupar y/o Filtrar por vendedor y Zonas" off drop={3} ls={-0.08} />
      <Option pl={5} label="Agrupar y/o Filtrar Por Sucursal Cliente" off drop={3} />
    </Box>
    <Row $h={21} $mt={4}>
      <SideLabel $w={69} $boxed $off>
        Sucursal
      </SideLabel>
      <Slot $m="0 0 0 2px">
        <Drop dim $w={245} $h={20} $sunken />
      </Slot>
    </Row>
    <Box $h={20} $mt={3}>
      <Row $h={18}>
        <SideLabel $w={64}>Orden</SideLabel>
        <Drop $ruled>Codigo-Descripción</Drop>
      </Row>
    </Box>
  </Column>
);

const RightColumn = () => (
  <Column $pl={0}>
    <Box $w={322} $h={143}>
      <Heading $dim>Zona 1</Heading>
      <ListArea $dim />
      <ZoneFoot $h={22} $pt={2}>
        <Option label="Agrupar por Zona 1" checked off regular size={12.9} mr={17} drop={-1} />
      </ZoneFoot>
    </Box>
    <Box $w={322} $h={145} $mt={7}>
      <Heading $dim $h={21}>
        Zona 2
      </Heading>
      <ListArea $dim />
      <ZoneFoot $h={23} $pt={4}>
        <Option label="Agrupar por Zona 2" checked off regular size={12.9} mr={11} drop={-1} />
      </ZoneFoot>
    </Box>
    <Box $w={320} $h={71} $mt={24}>
      <Heading $h={23} $pt={1}>
        Mas Opciones del Informe
      </Heading>
      <RadioRow $h={19} $mt={8} $pl={8}>
        <RadioDot $on />
        <OptionText $off $mt={1} $ls={-0.13}>
          Conversión a Fecha del movimiento
        </OptionText>
      </RadioRow>
      <RadioRow $h={19} $pl={8}>
        <RadioDot />
        <OptionText $off $mt={1} $ls={-0.1}>
          Conversión a Fecha de Corte
        </OptionText>
      </RadioRow>
    </Box>
    <Box $w={319} $h={79} $mt={9}>
      <Heading $h={22} $pt={1}>
        Tallas
      </Heading>
      <ListArea $dim />
    </Box>
    <Box $w={317} $h={79} $mt={11}>
      <Heading $dim $h={22}>
        Colores
      </Heading>
      <ListArea $dim />
    </Box>
    <Option mt={2} pl={3} h={22} mr={8} label="Mostrar Terceros Desactivados" off drop={4} ls={0.22} />
    <Option pl={3} h={27} mr={8} label="Ver Caracteristicas" off drop={4} ls={0.35} />
    <OptionRow $h={36} $pl={3}>
      <FlatBox />
      <SmallNote>
        Al exportar mostrar en todos los registros los
        <br />
        valores de las agrupaciones
      </SmallNote>
    </OptionRow>
    <Option pl={3} h={17} mr={8} label="Mostrar Hora y Forma de Pago" off drop={4} ls={0.08} />
    <Actions>
      <BigButton $w={109}>
        <BigIcon $w={42}>
          <Preview />
        </BigIcon>
        <BigText $size={14} $lh={16.500} $pt={1} $pr={2}>
          Vista
          <br />
          Previa
        </BigText>
      </BigButton>
      <BigButton $w={113}>
        <BigIcon>
          <ExcelX />
        </BigIcon>
        <BigText $size={12} $lh={13.300} $pr={8}>
          Exportar
          <br />a Excel
        </BigText>
      </BigButton>
    </Actions>
  </Column>
);

const ToolbarRemote = () => (
  <RemoteToolbar>
    <RemoteItem $w={42}>
      <XLock />
    </RemoteItem>
    <RemoteItem $w={89} $gap={5}>
      <Ring />
      <RemoteText>Inicio</RemoteText>
    </RemoteItem>
    <RemoteItem $w={119} $gap={10}>
      <Bolt />
      <RemoteText>Acciones</RemoteText>
      <Caret $ml={-3} />
    </RemoteItem>
    <RemoteItem $w={84} $gap={8}>
      <Monitor />
      <RemoteText>Ver</RemoteText>
      <Caret $ml={-2} />
    </RemoteItem>
    <RemoteItem $w={135} $gap={7}>
      <PhoneTalk />
      <RemoteText>Comunicar</RemoteText>
      <Caret />
    </RemoteItem>
    <RemoteItem $w={179} $gap={5}>
      <FileExtra />
      <RemoteText>Archivos y extras</RemoteText>
      <Caret $ml={3} />
    </RemoteItem>
    <Smile />
  </RemoteToolbar>
);

export default function App() {
  return (
    <Screen>
      <Global />
      <Desktop>
        <EdgeStrip>
          <EdgePart $h={27} $bg="#9b8583" $align="flex-start">
            <GoogleEdge />
          </EdgePart>
          <EdgePart $h={87} $bg="#2f3135" />
          <EdgePart $h={62} $bg="#2f5c94" $size={23}>
            g
          </EdgePart>
          <EdgePart $h={14} $bg="#1e2021" />
          <EdgePart $h={42} $bg="#1e2021" $align="flex-start">
            <EdgeArrow />
          </EdgePart>
          <EdgePart $h={12} $bg="#1e2021" />
          <EdgePart $h={42} $bg="#1e2021" $align="flex-start">
            <EdgeMark />
          </EdgePart>
          <EdgePart $h={779} $bg="#1e2021" />
        </EdgeStrip>
        <Center>
          <SessionBar>
            <Slot $m="-6px 0 0">
              <TeamViewer s={20} />
            </Slot>
            <SessionSep $ml={4} />
            <SessionText $ml={11} $size={13.500}>
              PE-HO-288
            </SessionText>
            <Slot $m="-1px 0 0 15px">
              <Cross s={12} sw={2.500} />
            </Slot>
            <SessionSep $ml={9} />
            <Slot $m="-3px 0 0 14px">
              <Svg w={15}>
                <path d="M7.500 0v14M0 7h15" stroke="#000" strokeWidth="3.500" />
              </Svg>
            </Slot>
            <Spacer />
            <SessionText $size={13.500} $ls={-0.2}>
              Licencia gratuita (solo uso no comercial)
            </SessionText>
            <Slot $m="-2px 24px 0 49px">
              <Svg w={130} h={12}>
                <path d="M.5 5.500h12M59.500 0v11.500h11V0M118 0l11 11M129 0l-11 11" stroke="#fff" />
              </Svg>
            </Slot>
          </SessionBar>
          <RemoteWindow>
            <TitleBar>
              <QuickAccess>
                <Undo />
                <Caret $s={3.500} $ml={6} $c="#4a6aa0" />
                <Slot $m="0 0 0 8px">
                  <Undo flip c="#b3bccb" />
                </Slot>
                <Caret $s={3.500} $ml={6} $c="#c0c4cc" />
              </QuickAccess>
              <Slot $m="9px 0 0 9px">
                <Svg w={7} h={9}>
                  <path d="M0 1h7" stroke="#35558f" strokeWidth="1.500" />
                  <path d="M0 4.500h7L3.500 8.500z" fill="#35558f" />
                </Svg>
              </Slot>
              <Spacer />
              <Slot $m="7px 21px 0 0">
                <Svg w={126} h={14}>
                  <path d="M.5 7h12M56.500 3.500h9v9h-9zM58.500 3V1.500h9v9H66M112.500 1l12 12M124.500 1l-12 12" stroke="#111" />
                </Svg>
              </Slot>
            </TitleBar>
            <TabStrip>
              <RibbonTab $active $w={119} $ls={0.12}>
                Complementos
              </RibbonTab>
              <RibbonTab $w={122}>Herramientas</RibbonTab>
              <Spacer />
              <Slot $m="4px 2px 0 0">
                <HelpOrb />
              </Slot>
            </TabStrip>
            <Ribbon>
              <RibbonGroup>
                <RibbonRow>
                  <Slot $m="0 10px 0 0">
                    <Undo />
                  </Slot>
                  <Slot $m="0 10px 0 0">
                    <Scissors />
                  </Slot>
                  <Slot $m="0 8px 0 0">
                    <Copy />
                  </Slot>
                  <Slot $m="0 8px 0 0">
                    <Paste />
                  </Slot>
                  <Slot $m="0 8px 0 0">
                    <Binoculars />
                  </Slot>
                  <Slot $m="0 8px 0 0">
                    <Sort a="A" b="Z" />
                  </Slot>
                  <Slot $m="0 9px 0 0">
                    <Sort a="Z" b="A" />
                  </Slot>
                  <Funnel extra="bolt" />
                  <RibbonText>Filtro excluyendo la selección</RibbonText>
                  <Slot $m="0 9px 0 7px">
                    <Funnel c="#6d7d9b" />
                  </Slot>
                  <Funnel extra="x" />
                </RibbonRow>
                <RibbonLabel>Barras personalizadas</RibbonLabel>
              </RibbonGroup>
            </Ribbon>
            <DocTabs>
              <DocTab $w={186}>
                <DocShape>
                  <Svg w={186} h={27}>
                    <path d="M0 27V4q0-3 3-3h170q6 0 8 8l5 18z" fill="#b6d5fb" stroke="#7ea6dc" />
                    <path d="M1 15h181l3 12H1z" fill="#96bff3" />
                  </Svg>
                </DocShape>
                <TabIcon $ml={5}>
                  <FormIcon />
                </TabIcon>
                <DocName $ls={0.22}>INFORMES DE VENTAS</DocName>
              </DocTab>
              <DocTab $w={230}>
                <DocShape>
                  <Svg w={230} h={27}>
                    <path d="M0 27V4q0-3 3-3h200q8 0 13 9l11 17z" fill="#fbd08c" stroke="#8f8a80" />
                    <path d="M1 14h216l9 13H1z" fill="#fdc766" />
                  </Svg>
                </DocShape>
                <TabIcon $ml={7}>
                  <FormIcon />
                </TabIcon>
                <DocName $bold $ls={-0.24}>
                  Informes de Ventas Criterios
                </DocName>
              </DocTab>
              <Spacer />
              <Slot $m="0 0 8px">
                <Cross s={10} sw={2.400} />
              </Slot>
            </DocTabs>
            <Workspace>
              <HelpPane>
                <HelpButton>
                  <HelpMark>?</HelpMark>
                  <HelpCaption>AYUDA</HelpCaption>
                </HelpButton>
              </HelpPane>
              <Form>
                <FormFrame>
                  <LeftColumn />
                  <MiddleColumn />
                  <RightColumn />
                </FormFrame>
              </Form>
            </Workspace>
            <StatusBar>
              <StatusCell $w={913} $pl={8} $rule>
                Fin. Vinc. 11|1
              </StatusCell>
              <Spacer />
              <StatusCell $w={78} $ls={0.1}>
                Bloq Num
              </StatusCell>
              <AccessKey />
              <StatusCell $w={245} $pl={4} $ls={0.33}>
                Funciona con Microsoft Office Access
              </StatusCell>
            </StatusBar>
            <Taskbar>
              <TaskCell $w={54}>
                <WindowsLogo />
              </TaskCell>
              <TaskCell $w={60}>
                <SearchGlyph />
              </TaskCell>
              <TaskCell $w={56}>
                <TaskView />
              </TaskCell>
              <TaskCell $w={64}>
                <Explorer />
              </TaskCell>
              <TaskCell $w={56}>
                <Chrome />
              </TaskCell>
              <TaskCell $w={62}>
                <AppLetter $bg="#185abd">W</AppLetter>
                <AppSheet $a="#41a5ee" $b="#2b7cd3" $c="#103f91" />
              </TaskCell>
              <TaskCell $w={58}>
                <AppLetter $bg="#107c41">X</AppLetter>
                <AppSheet $a="#21a366" $b="#107c41" $c="#185c37" />
              </TaskCell>
              <TaskCell $w={58} $active>
                <Helisa />
              </TaskCell>
              <Spacer />
              <TaskCell $w={30}>
                <People />
              </TaskCell>
              <TaskCell $w={54}>
                <Svg w={16} h={10}>
                  <path d="M1 9l7-7 7 7" stroke="#fff" strokeWidth="1.300" />
                </Svg>
              </TaskCell>
              <TaskCell $w={16}>
                <Battery />
              </TaskCell>
              <TaskCell $w={42}>
                <NetIcon />
              </TaskCell>
              <TaskCell $w={14}>
                <Volume />
              </TaskCell>
              <TrayText $w={58} $ls={-0.2}>
                ESP
                <br />
                LAA
              </TrayText>
              <TrayText $w={74} $size={13.500}>
                18:29
                <br />
                27/09/2020
              </TrayText>
              <TaskCell $w={61}>
                <Notice />
              </TaskCell>
              <TaskCell $w={7} />
            </Taskbar>
            <OfficeButton>
              <OfficeOrb />
            </OfficeButton>
            <ToolbarRemote />
            <RemoteHandle>
              <HandleArt />
            </RemoteHandle>
            <SideHandle>
              <SideArt />
            </SideHandle>
          </RemoteWindow>
        </Center>
        <EdgeStrip>
          <EdgePart $h={27} $bg="#9b8583" />
          <EdgePart $h={87} $bg="#2f3135" />
          <EdgePart $h={62} $bg="#2f5c94" $size={13} $align="flex-start">
            <Slot $m="0 0 0 2px">w</Slot>
          </EdgePart>
          <EdgePart $h={28} $bg="#1e2021" />
          <EdgePart $h={20} $bg="#1e2021">
            <EdgeCheck />
          </EdgePart>
          <EdgePart $h={749} $bg="#1e2021" />
          <EdgePart $h={48} $bg="#45494d" />
          <EdgePart $h={44} $bg="#1e2021" />
        </EdgeStrip>
      </Desktop>
    </Screen>
  );
}
